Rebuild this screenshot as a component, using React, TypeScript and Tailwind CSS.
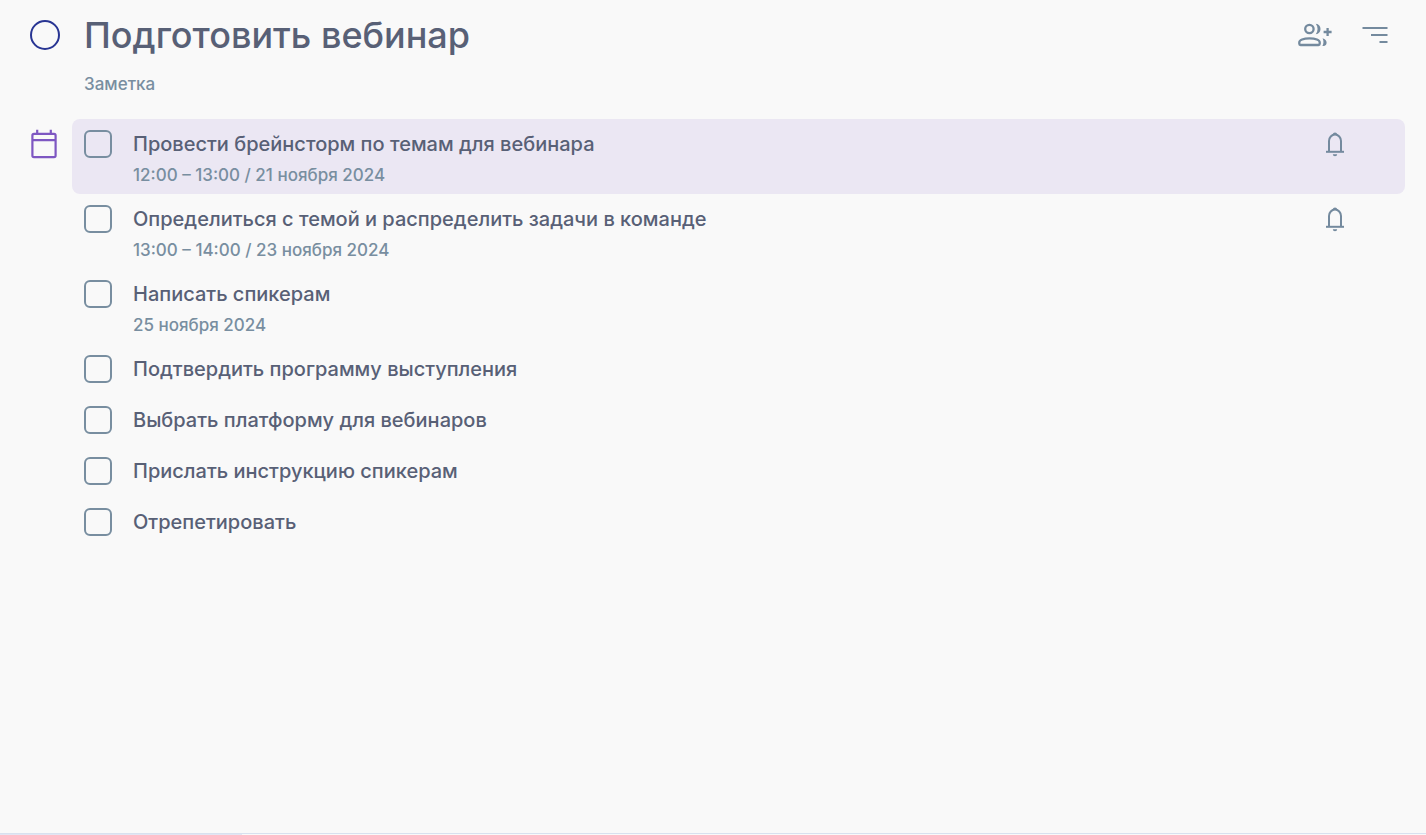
import { useState } from 'react';

interface Subtask {
  id: number;
  title: string;
  date?: string;
  reminder?: boolean;
}

const subtasks: Subtask[] = [
  { id: 1, title: 'Провести брейнсторм по темам для вебинара', date: '12:00 – 13:00 / 21 ноября 2024', reminder: true },
  { id: 2, title: 'Определиться с темой и распределить задачи в команде', date: '13:00 – 14:00 / 23 ноября 2024', reminder: true },
  { id: 3, title: 'Написать спикерам', date: '25 ноября 2024' },
  { id: 4, title: 'Подтвердить программу выступления' },
  { id: 5, title: 'Выбрать платформу для вебинаров' },
  { id: 6, title: 'Прислать инструкцию спикерам' },
  { id: 7, title: 'Отрепетировать' },
];

const CalendarIcon = () => (
  <svg width="28" height="30" viewBox="0 0 28 30" fill="none" stroke="currentColor" strokeWidth="2.2">
    <rect x="2.4" y="4.9" width="23.2" height="23.2" rx="1.6" />
    <path d="M2.4 11.2h23.2M7.2 .8V5M20.8 .8V5" />
  </svg>
);

const BellIcon = () => (
  <svg width="20" height="28" viewBox="0 0 20 28" fill="none" stroke="currentColor" strokeWidth="2">
    <path d="M4 21.5V11a6 6.4 0 0 1 12 0V21.5" />
    <path d="M1 21.8h18" />
    <path d="M7.8 4.8a2.2 2.4 0 0 1 4.4 0zM7.8 24.2h4.4a2.2 2 0 0 1-4.4 0z" fill="currentColor" stroke="none" />
  </svg>
);

const AddPeopleIcon = () => (
  <svg width="34" height="26" viewBox="0 0 34 26" fill="none" stroke="currentColor" strokeWidth="2.3">
    <circle cx="11.4" cy="7" r="4.2" />
    <path d="M1.3 20.3c0-2.1 4-4 10.2-4s10.2 1.9 10.2 4v1.5a1.2 1.2 0 0 1-1.2 1.2h-18a1.2 1.2 0 0 1-1.2-1.2z" />
    <path d="M17.8 1.8c3 .2 4.7 2.4 4.7 5.2s-1.7 5-4.7 5.2c2.4-3.2 2.4-7.2 0-10.4zM24.6 16.2c2.6 1 4 2.4 4 4.4 0 2.2-1 3.5-3.4 3.5h-.8c1.4-2.5 1.4-5.3.2-7.9z" fill="currentColor" stroke="none" />
    <path d="M29.6 6v8M25.6 10h8" />
  </svg>
);

const MenuIcon = () => (
  <svg width="26" height="20" viewBox="0 0 26 20" fill="none" stroke="currentColor" strokeWidth="2.2">
    <path d="M.5 3h25M9 10h16.5M17.5 17h8" />
  </svg>
);

const App = () => {
  const [done, setDone] = useState<number[]>([]);
  const [selected, setSelected] = useState(1);

  const toggle = (id: number) => {
    setDone(prev => (prev.includes(id) ? prev.filter(item => item !== id) : [...prev, id]));
  };

  return (
    <div className="min-h-screen flex flex-col bg-[#f9f9f9] font-['Inter',sans-serif] font-medium text-[#586076]">
      {/* Task header */}
      <header className="flex items-start pl-[30px] pr-[38px] pt-2.5">
        <input
          id="task-done"
          type="checkbox"
          className="appearance-none w-[30px] h-[30px] mt-2.5 mr-6 shrink-0 rounded-full border-2 border-[#283593] checked:bg-[#283593]"
        />
        <div className="flex-1 min-w-0">
          <h1 className="text-[36px] leading-[50px] font-medium">
            <label htmlFor="task-done">Подготовить вебинар</label>
          </h1>
          <p className="mt-2.5 text-[17px] leading-7 text-[#788ea0]">Заметка</p>
        </div>
        <div className="flex items-center gap-[30px] h-[50px] text-[#748a9e]">
          <button type="button" aria-label="Добавить участников">
            <AddPeopleIcon />
          </button>
          <button type="button" aria-label="Меню">
            <MenuIcon />
          </button>
        </div>
      </header>

      {/* Subtasks */}
      <main className="flex flex-1 pl-[30px] pr-[21px] mt-[21px]">
        <button type="button" aria-label="Календарь" className="self-start mt-2.5 mr-3.5 text-[#7e57c2]">
          <CalendarIcon />
        </button>
        <ul className="flex-1 min-w-0">
          {subtasks.map(task => (
            <li
              key={task.id}
              onClick={() => setSelected(task.id)}
              className={`flex items-start rounded-lg pl-3 pr-[60px] pt-2.5 ${task.date ? 'pb-[3px]' : 'pb-[11px]'} ${
                selected === task.id ? 'bg-[#ebe7f3]' : ''
              }`}
            >
              <input
                id={`subtask-${task.id}`}
                type="checkbox"
                checked={done.includes(task.id)}
                onChange={() => toggle(task.id)}
                className="appearance-none w-7 h-7 mt-px mr-[21px] shrink-0 rounded-md border-2 border-[#788ea0] checked:bg-[#788ea0]"
              />
              <div className="flex-1 min-w-0">
                <label htmlFor={`subtask-${task.id}`} className="block text-[20px] leading-[30px]">
                  {task.title}
                </label>
                {task.date && <p className="text-[17px] leading-8 text-[#788ea0]">{task.date}</p>}
              </div>
              {task.reminder && (
                <button type="button" aria-label="Напоминание" className="mt-px text-[#748a9e]">
                  <BellIcon />
                </button>
              )}
            </li>
          ))}
        </ul>
      </main>

      {/* Progress line */}
      <footer className="border-t border-[#d8e1ef]">
        <div className="h-px w-[17%] bg-[#e3e5f2]" />
      </footer>
    </div>
  );
};

export default App;
